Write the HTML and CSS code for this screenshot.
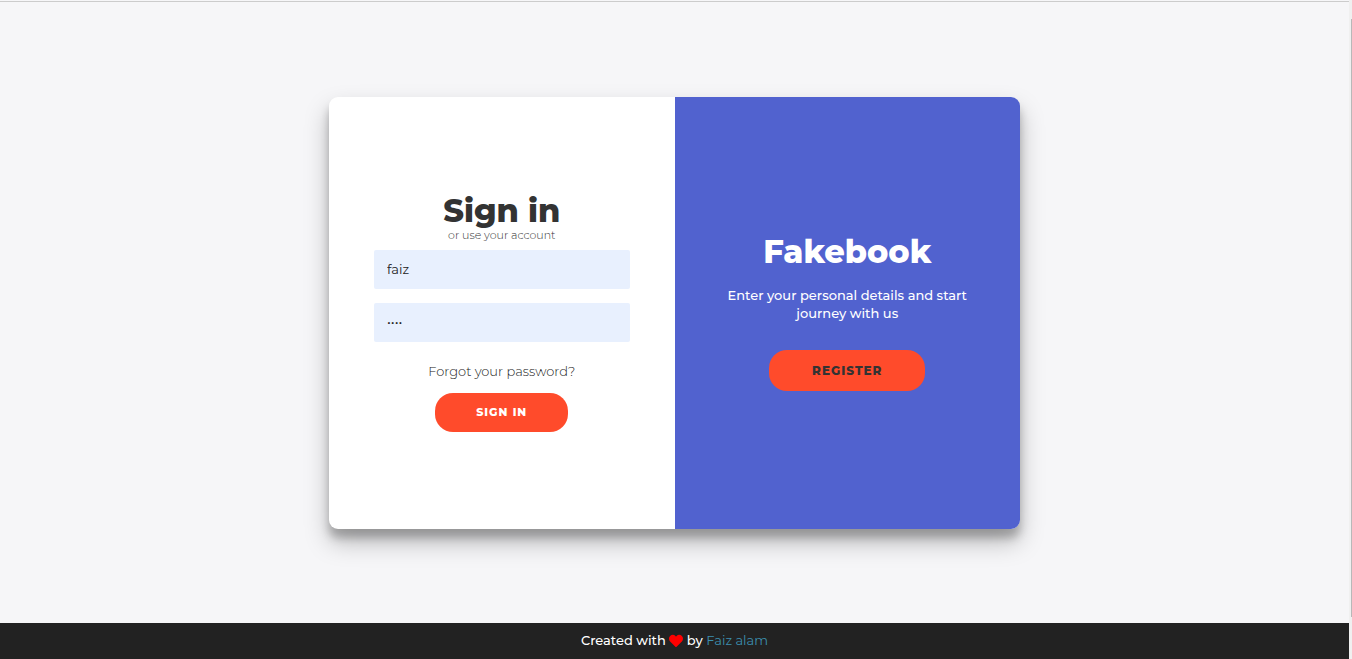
FILE: index.html
```html
<!DOCTYPE html>
<html lang="en">
<head>
  <meta charset="utf-8">
  <meta name="viewport" content="width=device-width, initial-scale=1">
  <title>Fakebook</title>
  <link rel="stylesheet" href="styles.css">
</head>
<body>
  <div class="page">
    <main class="main">
      <div class="card">
        <form class="panel sign-in">
          <h1 class="title">Sign in</h1>
          <span class="hint">or use your account</span>
          <input class="field" type="text" value="faiz" aria-label="Username">
          <input class="field password" type="password" value="1234" aria-label="Password">
          <a class="forgot" href="#">Forgot your password?</a>
          <button class="button" type="submit">SIGN IN</button>
        </form>
        <section class="panel welcome">
          <h1 class="title">Fakebook</h1>
          <p class="intro">Enter your personal details and start journey with us</p>
          <a class="button register" href="#">REGISTER</a>
        </section>
      </div>
    </main>
    <footer class="footer">
      <p class="credit">Created with
        <svg class="heart" viewBox="0 0 512 512" aria-label="love"><path d="M462.300 62.600C407.500 15.900 326 24.300 275.700 76.200L256 96.500l-19.700-20.300C186.100 24.300 104.500 15.900 49.700 62.600c-62.800 53.600-66.100 149.800-9.900 207.900l193.500 199.800c12.500 12.900 32.800 12.900 45.300 0l193.500-199.800c56.300-58.100 53-154.300-9.800-207.900z"/></svg>
        by <a class="author" href="#">Faiz alam</a></p>
    </footer>
  </div>
  <div class="scroll-track"><div class="scroll-thumb"></div></div>
</body>
</html>
```
FILE: styles.css
```css
* {
  box-sizing: border-box;
}

body {
  display: flex;
  min-height: 100vh;
  margin: 0;
  background: #f6f6f8;
  color: #333;
  font-family: Montserrat, Inter, sans-serif;
  font-size: 13px;
  line-height: 18px;
}

.page {
  display: flex;
  flex: 1;
  flex-direction: column;
  padding-top: 1px;
}

.main {
  display: flex;
  flex: 1;
  align-items: center;
  justify-content: center;
  padding-top: 1px;
  border-top: 1px solid #ccc;
}

.card {
  display: grid;
  grid-template-columns: 1fr 1fr;
  width: 100%;
  max-width: 691px;
  min-height: 432px;
  overflow: hidden;
  border-radius: 9px;
  background: #fff;
  box-shadow: 0 13px 25px rgba(0, 0, 0, 0.25), 0 9px 9px rgba(0, 0, 0, 0.22);
}

.panel {
  display: flex;
  flex-direction: column;
  align-items: center;
  justify-content: center;
  padding: 0 45px 1px;
  text-align: center;
}

.welcome {
  background: #5162cf;
  color: #fff;
}

.title {
  margin: 0;
  font-size: 32px;
  font-weight: 800;
  line-height: 36px;
}

.hint {
  margin-bottom: 9px;
  font-size: 11px;
  font-weight: 300;
  line-height: 12px;
}

.field {
  width: 100%;
  height: 39px;
  margin: 0 0 14px;
  padding: 0 13px 2px;
  border: 0;
  border-radius: 2px;
  background: #e8f0fe;
  color: #222;
  font: inherit;
}

.forgot {
  margin: 6px 0 13px;
  color: #222;
  font-weight: 300;
  text-decoration: none;
}

.button {
  padding: 12px 41px;
  border: 0;
  border-radius: 18px;
  background: #ff4b2b;
  color: #fff;
  font-family: inherit;
  font-size: 11px;
  font-weight: 800;
  letter-spacing: 1px;
  line-height: 15px;
  text-decoration: none;
}

.intro {
  margin: 16px 0 28px;
  font-weight: 500;
}

.register {
  padding: 13px 43px;
  color: #333;
  font-size: 12px;
}

.footer {
  padding: 8px 9px 10px;
  background: #222;
  color: #fff;
  font-weight: 500;
  text-align: center;
}

.credit {
  margin: 0;
}

.heart {
  width: 14px;
  height: 14px;
  fill: #f00;
  vertical-align: -3px;
}

.author {
  color: #3c8fb0;
  font-weight: 400;
  text-decoration: none;
}

.scroll-track {
  display: flex;
  justify-content: flex-end;
  width: 3px;
  padding: 19px 0 42px;
  background: #f0f0f0;
}

.scroll-thumb {
  width: 1px;
  background: #b8b8b8;
}
```
